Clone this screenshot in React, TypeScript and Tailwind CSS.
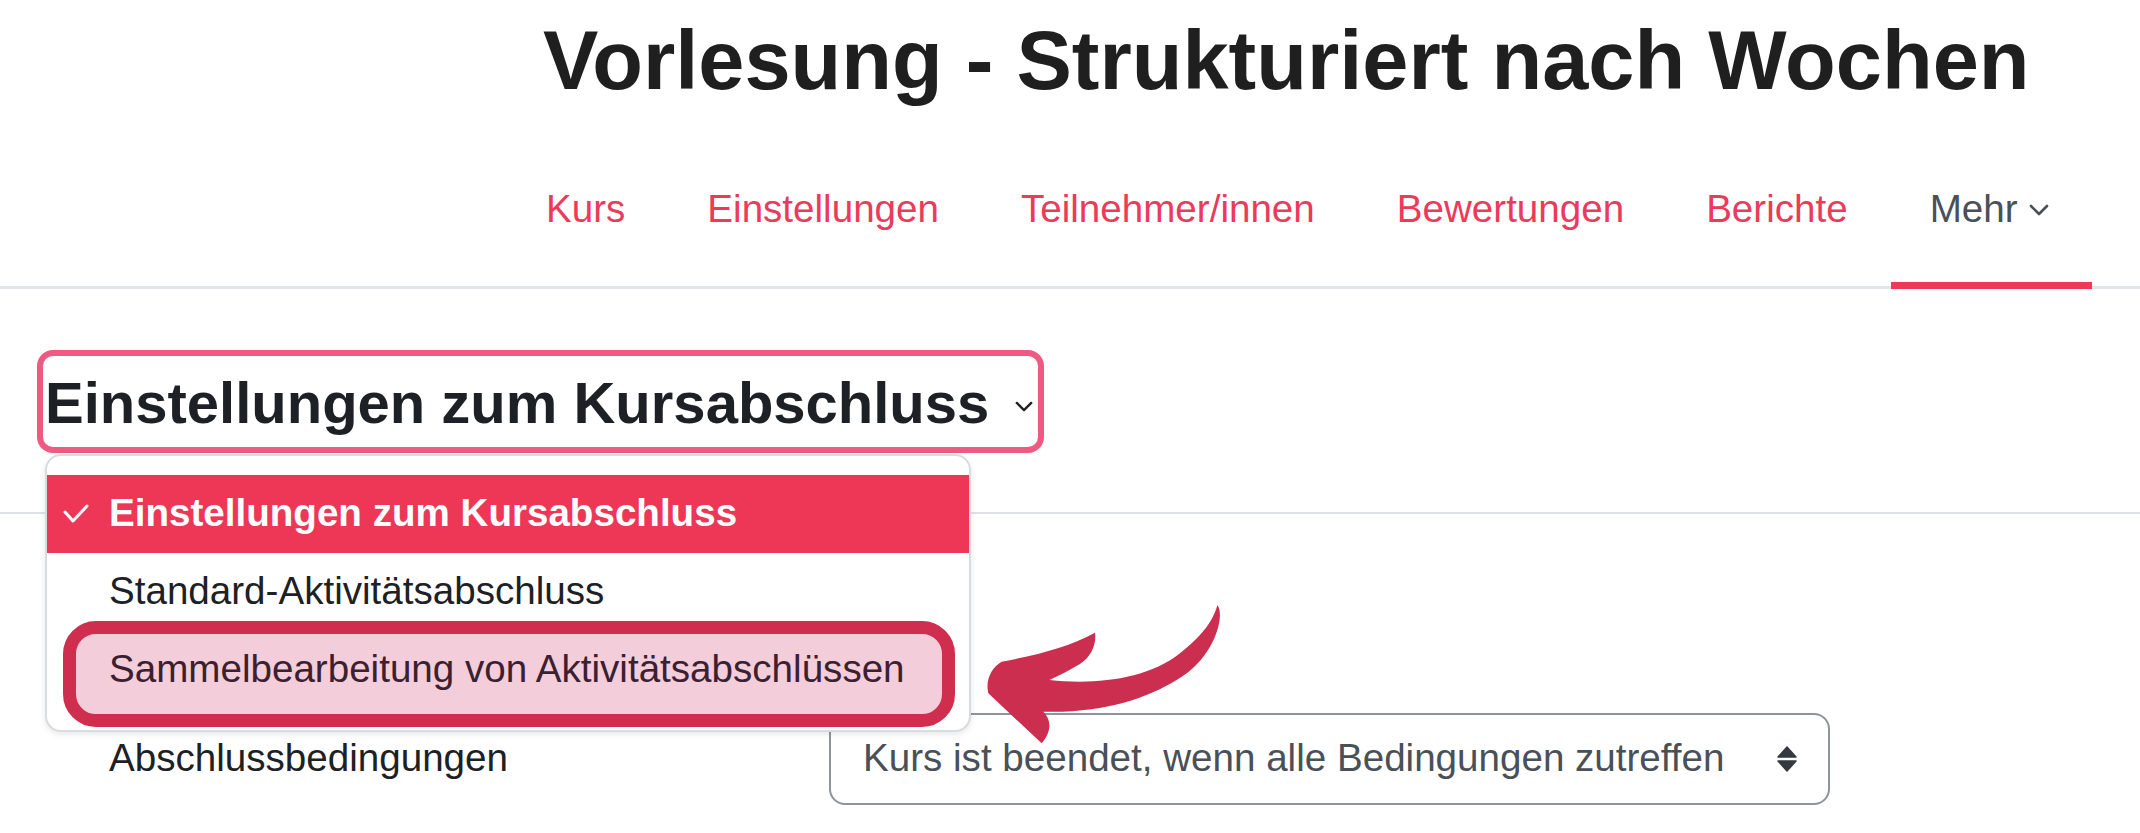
import React from 'react';

const navItems = ['Kurs', 'Einstellungen', 'Teilnehmer/innen', 'Bewertungen', 'Berichte'];

const Chevron = ({ className }: { className?: string }) => (
  <svg viewBox="0 0 20 12" className={className} fill="none" stroke="currentColor" strokeWidth="2.6" strokeLinecap="round" strokeLinejoin="round">
    <polyline points="2,2 10,10 18,2" />
  </svg>
);

const Check = () => (
  <svg viewBox="0 0 26 20" className="w-[26px] h-[20px]" fill="none" stroke="white" strokeWidth="3" strokeLinecap="round" strokeLinejoin="round">
    <polyline points="2,8 10,17 24,2" />
  </svg>
);

const SortArrows = () => (
  <svg viewBox="0 0 20 26" className="w-[20px] h-[26px]" fill="#343a40" stroke="#343a40" strokeWidth="1.5" strokeLinejoin="round">
    <path d="M10 1 L19 11 L1 11 Z" />
    <path d="M1 15 L19 15 L10 25 Z" />
  </svg>
);

// hand-drawn looking curved arrow pointing at the highlighted menu entry
const CurvedArrow = () => (
  <svg viewBox="0 0 900 600" className="w-[300px] h-[200px]">
    <path
      fill="#cc2e50"
      d="M772 76
         C 795 100, 770 230, 650 300
         C 560 355, 430 400, 250 395
         C 275 420, 275 455, 245 490
         L 85 340
         C 75 300, 95 262, 125 245
         C 230 225, 330 200, 405 158
         C 410 190, 395 230, 360 252
         C 330 270, 300 285, 268 300
         C 400 315, 560 300, 660 220
         C 730 165, 760 120, 772 76 Z"
    />
  </svg>
);

export default function App() {
  return (
    <div className="w-[2140px] h-[833px] bg-white overflow-hidden font-['Liberation_Sans',Arial,sans-serif]">
      <header className="border-b-[3px] border-[#e2e5e9]">
        <h1 className="pl-[543px] pt-[19px] text-[83px] leading-none font-bold text-[#1f1f1f]">
          Vorlesung - Strukturiert nach Wochen
        </h1>
        <nav className="mt-[88px] ml-[505px] flex">
          {navItems.map((item) => (
            <a key={item} className="px-[41px] pb-[57px] text-[38.6px] leading-none text-[#ec3a5b]">
              {item}
            </a>
          ))}
          <a className="relative px-[41px] pb-[57px] text-[38.6px] leading-none text-[#495057] flex items-start gap-[11px]">
            Mehr
            <Chevron className="w-[20px] h-[12px] mt-[14px]" />
            <span className="absolute left-[2px] right-[-2px] bottom-[-3px] h-[7px] bg-[#ef3a57]" />
          </a>
        </nav>
      </header>

      <main className="relative">
        <div className="pl-[37px] pt-[61px]">
          <div className="inline-flex items-center gap-[26px] border-[6px] border-[#ee5a82] rounded-[16px] pl-[2px] pr-[5px] pt-[18px] pb-[15px]">
            <h2 className="text-[58px] leading-none font-bold text-[#1d2125]">Einstellungen zum Kursabschluss</h2>
            <Chevron className="w-[18px] h-[11px] text-[#1d2125] mt-[8px]" />
          </div>
        </div>

        <div className="mt-[59px] border-t-2 border-[#dee2e6]" />

        <div className="mt-[199px] pl-[109px] flex items-center">
          <span className="w-[720px] text-[38.6px] leading-none text-[#1d2125]">Abschlussbedingungen</span>
          <div className="w-[1001px] h-[92px] border-2 border-[#8e949b] rounded-[16px] pl-[32px] pr-[31px] flex items-center justify-between">
            <span className="text-[38.6px] leading-none text-[#495057]">Kurs ist beendet, wenn alle Bedingungen zutreffen</span>
            <SortArrows />
          </div>
        </div>

        {/* open dropdown of the heading select */}
        <div className="absolute left-[45px] top-[165px] w-[926px] h-[278px] bg-white border-2 border-[#d9dcdf] rounded-[16px] shadow-[0_2px_6px_rgba(0,0,0,0.10)] pt-[19px]">
          <div className="h-[78px] bg-[#ee3756] flex items-center pl-[16px] gap-[20px]">
            <Check />
            <span className="text-[38.6px] leading-none font-bold text-white">Einstellungen zum Kursabschluss</span>
          </div>
          <div className="h-[78px] flex items-center pl-[62px]">
            <span className="text-[38.6px] leading-none text-[#1d2125]">Standard-Aktivitätsabschluss</span>
          </div>
          <div className="relative h-[78px] flex items-center pl-[62px]">
            <span className="absolute left-[16px] right-[14px] top-[-10px] bottom-[-18px] border-[13px] border-[#cf2e4f] bg-[#f3cdd9] rounded-[33px]" />
            <span className="relative text-[38.6px] leading-none text-[#3a2030]">Sammelbearbeitung von Aktivitätsabschlüssen</span>
          </div>
        </div>

        <div className="absolute left-[960px] top-[291px]">
          <CurvedArrow />
        </div>
      </main>
    </div>
  );
}
